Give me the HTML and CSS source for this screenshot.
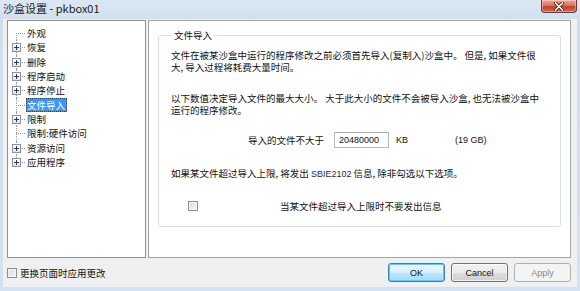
FILE: index.html
```html
<!DOCTYPE html>
<html lang="zh-CN">
<head>
<meta charset="utf-8">
<title>沙盒设置 - pkbox01</title>
<link rel="stylesheet" href="styles.css">
</head>
<body>
<div class="window">
  <div class="titlebar">
    <span class="title">沙盒设置 - pkbox01</span>
    <span class="close">
      <svg width="14" height="9" viewBox="0 0 14 9"><path d="M3.5 1 L10.5 8 M10.5 1 L3.5 8" stroke="#5a1a10" stroke-width="3.2" stroke-linecap="round"/><path d="M3.5 1 L10.5 8 M10.5 1 L3.5 8" stroke="#ffffff" stroke-width="1.7" stroke-linecap="round"/></svg>
    </span>
  </div>
  <div class="client">
    <div class="main">
      <div class="tree">
        <div class="row first"><span class="label">外观</span></div>
        <div class="row"><span class="plus"></span><span class="label">恢复</span></div>
        <div class="row"><span class="plus"></span><span class="label">删除</span></div>
        <div class="row"><span class="plus"></span><span class="label">程序启动</span></div>
        <div class="row"><span class="plus"></span><span class="label">程序停止</span></div>
        <div class="row"><span class="label selected">文件导入</span></div>
        <div class="row"><span class="plus"></span><span class="label">限制</span></div>
        <div class="row"><span class="label">限制:硬件访问</span></div>
        <div class="row"><span class="plus"></span><span class="label">资源访问</span></div>
        <div class="row last"><span class="plus"></span><span class="label">应用程序</span></div>
      </div>
      <div class="panel">
        <fieldset class="group">
          <legend>文件导入</legend>
          <p class="para p1"><span class="line">文件在被某沙盒中运行的程序修改之前必须首先导入(复制入)沙盒中。 但是, 如果文件很</span><span class="line">大, 导入过程将耗费大量时间。</span></p>
          <p class="para p2"><span class="line">以下数值决定导入文件的最大大小。 大于此大小的文件不会被导入沙盒, 也无法被沙盒中</span><span class="line">运行的程序修改。</span></p>
          <div class="sizerow">
            <span class="sizelabel">导入的文件不大于</span>
            <span class="input">20480000</span>
            <span class="unit">KB</span>
            <span class="gb">(19 GB)</span>
          </div>
          <p class="para p3"><span class="line">如果某文件超过导入上限, 将发出 <span class="latin">SBIE2102</span> 信息, 除非勾选以下选项。</span></p>
          <div class="checkrow">
            <span class="checkbox"></span>
            <span class="checklabel">当某文件超过导入上限时不要发出信息</span>
          </div>
        </fieldset>
      </div>
    </div>
    <div class="bottom">
      <div class="apply-check">
        <span class="checkbox"></span>
        <span>更换页面时应用更改</span>
      </div>
      <div class="buttons">
        <span class="btn default">OK</span>
        <span class="btn">Cancel</span>
        <span class="btn disabled">Apply</span>
      </div>
    </div>
  </div>
</div>
</body>
</html>
```

FILE: styles.css
```css
* { box-sizing: border-box; }

html, body {
  margin: 0;
  padding: 0;
}

body {
  width: 580px;
  height: 291px;
  overflow: hidden;
  background: #d3e1f1;
  font-family: "Noto Sans CJK SC", "Noto Sans", sans-serif;
  font-size: 9.5px;
  color: #111;
}

.window {
  display: flex;
  flex-direction: column;
  height: 291px;
  background: linear-gradient(#dce7f4, #d0dfef 20px, #d3e1f1);
}

.titlebar {
  height: 19px;
  display: flex;
  align-items: flex-start;
  justify-content: space-between;
  padding-left: 3px;
  padding-right: 3px;
}

.title {
  font-size: 11px;
  line-height: 17px;
  color: #1a1a1a;
}

.close {
  width: 36px;
  height: 13px;
  border: 1px solid #7b3325;
  border-top: none;
  border-radius: 0 0 4px 4px;
  background: linear-gradient(#e8a89a, #d57462 45%, #c2432d 55%, #d66a4f);
  display: flex;
  align-items: center;
  justify-content: center;
  box-shadow: inset 0 0 0 1px rgba(255,255,255,0.35);
}

.client {
  flex: 1;
  margin: 0 3px 4px 3px;
  background: #f0f0f0;
  padding: 1px 6px 0 4px;
  display: flex;
  flex-direction: column;
}

.main {
  display: flex;
  height: 238px;
  gap: 2px;
}

.tree {
  width: 139px;
  background: #fff;
  border: 1px solid #8e9299;
  padding-top: 5px;
}

.row {
  position: relative;
  height: 14.33px;
  display: flex;
  align-items: center;
  padding-left: 18px;
  line-height: 12px;
}

.row::before {
  content: "";
  position: absolute;
  left: 8px;
  top: 50%;
  width: 9px;
  border-top: 1px dotted #9a9a9a;
}

.row::after {
  content: "";
  position: absolute;
  left: 8px;
  top: 0;
  bottom: 0;
  border-left: 1px dotted #9a9a9a;
}

.row.first::after { top: 50%; }
.row.last::after { bottom: 50%; }

.plus {
  position: absolute;
  left: 4px;
  top: 50%;
  margin-top: -4px;
  width: 9px;
  height: 9px;
  border: 1px solid #919191;
  background: linear-gradient(#ffffff, #e3e3e3);
  z-index: 1;
}

.plus::before {
  content: "";
  position: absolute;
  left: 1px;
  top: 3px;
  width: 5px;
  height: 1px;
  background: #1f3d77;
}

.plus::after {
  content: "";
  position: absolute;
  left: 3px;
  top: 1px;
  width: 1px;
  height: 5px;
  background: #1f3d77;
}

.label {
  padding: 1px 1px;
  white-space: nowrap;
}

.label.selected {
  background: #3399ff;
  color: #fff;
  outline: 1px dotted #5a3a1a;
  outline-offset: -1px;
  padding: 1px 2px 1px 1px;
}

.panel {
  flex: 1;
  background: #fff;
  border: 1px solid #a3a7ad;
  padding: 8px 9px 0 9px;
}

.group {
  margin: 0;
  border: 1px solid #d5dfe5;
  border-radius: 3px;
  padding: 0 10px 14px 12px;
  min-width: 0;
}

.group legend {
  padding: 0 2px;
  margin-left: 1px;
  line-height: 12px;
  font-size: 9.5px;
}

.para {
  margin: 0;
  white-space: nowrap;
  display: flex;
  flex-direction: column;
}

.line {
  display: block;
  height: 12px;
  line-height: 12px;
  overflow: hidden;
}

.p1 { margin-top: 8px; }
.p2 { margin-top: 19px; }
.p3 { margin-top: 19px; }

.latin {
  font-family: "Liberation Sans", sans-serif;
  font-size: 9px;
  color: #1c2a4a;
}

.sizerow {
  margin-top: 16px;
  display: flex;
  align-items: center;
  height: 16px;
  padding-left: 77px;
}

.sizelabel {
  width: 86px;
}

.input {
  width: 55px;
  height: 16px;
  border: 1px solid #b4b8c0;
  border-top-color: #abadb3;
  background: #fff;
  font-family: "Liberation Sans", sans-serif;
  font-size: 9px;
  line-height: 14px;
  padding-left: 4px;
}

.unit {
  margin-left: 7px;
  width: 59px;
  font-family: "Liberation Sans", sans-serif;
  font-size: 9px;
}

.gb {
  font-family: "Liberation Sans", sans-serif;
  font-size: 9px;
}

.checkrow {
  margin-top: 21px;
  display: flex;
  align-items: center;
  height: 12px;
  padding-left: 17px;
}

.checklabel {
  margin-left: 82px;
  line-height: 12px;
}

.checkbox {
  display: inline-block;
  width: 10px;
  height: 10px;
  border: 1px solid #8e8f8f;
  background: linear-gradient(135deg, #dcdcdc, #f6f6f6);
  box-shadow: inset 0 0 0 1px #f4f4f4;
  flex: none;
}

.bottom {
  margin-top: 5px;
  height: 19px;
  display: flex;
  align-items: center;
  justify-content: space-between;
}

.apply-check {
  display: flex;
  align-items: center;
  gap: 3px;
  padding-top: 1px;
  line-height: 12px;
}

.buttons {
  display: flex;
  gap: 6px;
}

.btn {
  width: 57px;
  height: 19px;
  border: 1px solid #707070;
  border-radius: 3px;
  background: linear-gradient(#f2f2f2 0%, #ebebeb 50%, #dddddd 51%, #cfcfcf 100%);
  box-shadow: inset 0 0 0 1px rgba(255,255,255,0.7);
  font-family: "Liberation Sans", sans-serif;
  font-size: 9px;
  color: #111;
  display: flex;
  align-items: center;
  justify-content: center;
}

.btn.default {
  border-color: #3c7fb1;
  background: linear-gradient(#eaf6fd 0%, #d9f0fc 50%, #bee6fd 51%, #a7d9f5 100%);
  box-shadow: inset 0 0 0 1px #48d5f8;
}

.btn.disabled {
  border-color: #adb2b5;
  background: #f4f4f4;
  box-shadow: none;
  color: #8a8a8a;
}
```
